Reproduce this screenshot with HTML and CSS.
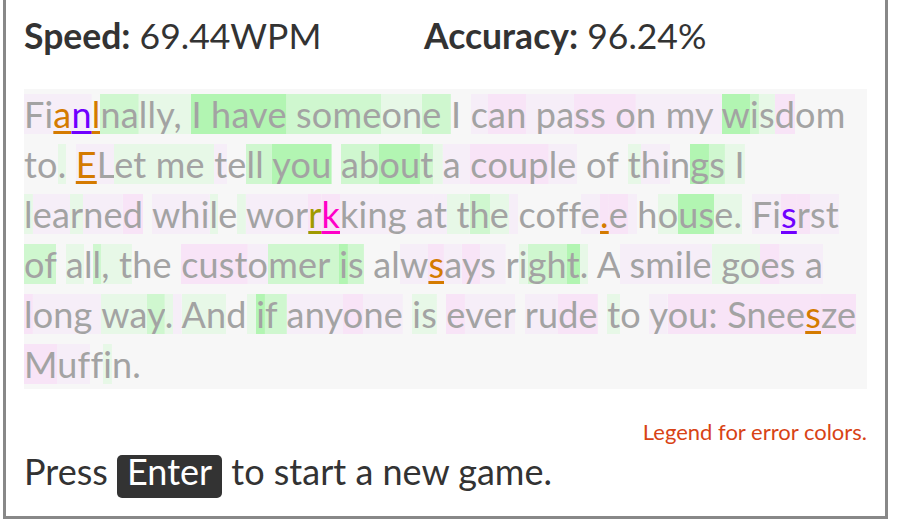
FILE: index.html
```html
<!DOCTYPE html>
<html>
<head>
<meta charset="utf-8">
<title>Typing game</title>
<link rel="stylesheet" href="styles.css">
</head>
<body>
<div class="card">
  <div class="stats">
    <div class="stat"><b>Speed:</b> 69.44WPM</div>
    <div class="stat"><b>Accuracy:</b> 96.24%</div>
  </div>
  <div class="text"><span class="p">Fi</span><span class="p eo">a</span><span class="p ep">n</span><span class="eo">l</span><span class="b">na</span><span class="a">lly, </span><span class="c">I have</span><span class="b"> some</span><span class="a">on</span><span class="b">e </span>I <span class="p">c</span><span class="q">an</span><span class="p"> pa</span><span class="q">ss o</span><span class="p">n my </span><span class="c">w</span><span class="b">i</span><span class="a">s</span><span class="q">d</span>om to<span class="a">.</span> <span class="p eo">E</span><span class="p">L</span><span class="a">et me </span><span class="p">t</span>e<span class="b">ll </span><span class="c">you</span> <span class="b">ab</span><span class="c">ou</span><span class="b">t</span><span class="a"> </span><span class="p">a </span><span class="q">coup</span><span class="p">le</span> of <span class="a">t</span><span class="p">hi</span>n<span class="c">g</span><span class="b">s</span><span class="a"> I</span> <span class="a">l</span><span class="p">ea</span><span class="a">r</span><span class="p">ne</span><span class="q">d</span> <span class="p">whi</span><span class="a">l</span>e<span class="a"> </span><span class="p">wor</span><span class="q ey">r</span><span class="q em">k</span><span class="p">king a</span><span class="p">t</span><span class="a"> t</span><span class="b">h</span><span class="a">e</span><span class="p"> </span>coff<span class="p">e</span><span class="q eo">.</span><span class="q">e</span><span class="p"> </span>h<span class="a">o</span><span class="c">us</span><span class="a">e.</span> <span class="p">Fi</span><span class="q ep">s</span><span class="q">r</span><span class="p">st</span> <span class="b">of</span> <span class="a">a</span>l<span class="b">l</span><span class="a">, t</span>he <span class="q">cust</span><span class="p">o</span><span class="b">mer </span><span class="c">i</span><span class="b">s</span> al<span class="p">w</span><span class="q eo">s</span><span class="p">a</span><span class="q">y</span><span class="p">s </span>r<span class="a">i</span><span class="b">gh</span><span class="c">t</span><span class="a">.</span> A<span class="p"> smile</span><span class="a"> go</span><span class="q">e</span><span class="p">s a</span> <span class="q">l</span><span class="p">ong </span><span class="a">wa</span><span class="b">y</span><span class="a">.</span><span class="p"> </span><span class="a">An</span>d<span class="a"> </span><span class="c">i</span><span class="b">f </span><span class="p">any</span><span class="q">o</span><span class="p">ne</span> <span class="a">is</span> <span class="q">e</span><span class="p">ver</span> <span class="p">ru</span><span class="q">de</span> <span class="a">t</span>o <span class="p">y</span><span class="q">ou: Snee</span><span class="q eo">s</span><span class="q">ze</span> <span class="q">M</span><span class="p">uf</span>f<span class="a">i</span>n.</div>
  <div class="legend">Legend for error colors.</div>
  <div class="press">Press <kbd class="key">Enter</kbd> to start a new game.</div>
</div>
</body>
</html>
```
FILE: styles.css
```css
html, body {
  margin: 0;
  background: #fff;
}
body {
  font-family: Lato, "Open Sans", sans-serif;
  color: #333;
}
.card {
  box-sizing: border-box;
  width: 885px;
  margin-left: 3px;
  border: 3px solid #888;
  border-top: 0;
  padding: 11px 18px 18px;
}
.stats {
  display: flex;
  font-size: 35.5px;
  line-height: 50px;
  margin-bottom: 28px;
}
.stat {
  width: 400px;
  white-space: nowrap;
}
.stat b {
  font-weight: 700;
}
.text {
  background: #f7f7f7;
  color: #a3a3a3;
  font-size: 36px;
  line-height: 50px;
  letter-spacing: 0.2px;
}
.text span {
  --bg: transparent;
  background: linear-gradient(var(--bg), var(--bg)) center / 100% 40px no-repeat;
}
.text .a { --bg: #e7f8e7; }
.text .b { --bg: #cff7cf; }
.text .c { --bg: #b2f5b2; }
.text .p { --bg: #f6eef8; }
.text .q { --bg: #f8e4f7; }
.eo, .ep, .ey, .em {
  text-decoration: underline;
  text-decoration-thickness: 3px;
  text-underline-offset: 3px;
  text-decoration-skip-ink: none;
}
.eo { color: #d47b00; }
.ep { color: #7000ff; }
.ey { color: #a09a00; }
.em { color: #ff00c8; }
.legend {
  margin-top: 30px;
  text-align: right;
  font-size: 22px;
  line-height: 26px;
  color: #d84315;
}
.press {
  margin-top: 1px;
  font-size: 36px;
  line-height: 50px;
  white-space: nowrap;
}
.key {
  display: inline-block;
  font-family: inherit;
  font-size: 36px;
  line-height: 33px;
  padding: 0 10px 10px;
  background: #333;
  color: #fff;
  border-radius: 5px;
}
```
